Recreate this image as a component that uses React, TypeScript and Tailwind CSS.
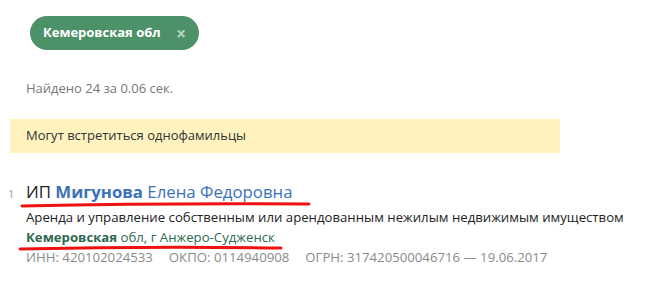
export default function App() {
  return (
    <div className="relative h-[287px] w-[653px] overflow-hidden bg-white text-[13px] text-[#333]" style={{ fontFamily: '"Open Sans", "Noto Sans", sans-serif' }}>
      <div className="pl-[30px] pt-[16px]">
        <div className="flex h-[34px] w-[169px] items-center justify-between rounded-full bg-[#4d9168] pl-[13px] pr-[13px]">
          <span className="text-[13px] font-bold text-white">Кемеровская обл</span>
          <span className="text-[17px] font-bold leading-none text-[#b3d6bf]">×</span>
        </div>
      </div>

      <div className="mt-[29px] pl-[26px] text-[#777]">Найдено 24 за 0.06 сек.</div>

      <div className="ml-[10px] mt-[20px] flex h-[34px] w-[550px] items-center bg-[#fef2bf] pl-[16px] text-[#333]">
        Могут встретиться однофамильцы
      </div>

      <div className="relative mt-[27px] flex">
        <div className="w-[26px] pl-[8px] pt-[6px] text-[11px] text-[#999]">1</div>
        <div className="flex flex-col">
          <div className="text-[16.8px] leading-[24px] text-[#3b71b9]">
            <span className="text-[#222]">ИП </span>
            <span className="font-bold">Мигунова</span> Елена Федоровна
          </div>
          <div className="mt-[3px] text-[13.2px] leading-[20px] text-[#222]">
            Аренда и управление собственным или арендованным нежилым недвижимым имуществом
          </div>
          <div className="text-[13.2px] leading-[20px] text-[#2d6a4f]">
            <span className="font-bold">Кемеровская</span> обл, г Анжеро-Судженск
          </div>
          <div className="flex gap-[16px] text-[13.2px] leading-[20px] text-[#8a8a8a]">
            <span>ИНН: 420102024533</span>
            <span>ОКПО: 0114940908</span>
            <span>ОГРН: 317420500046716 — 19.06.2017</span>
          </div>
        </div>
        <svg className="pointer-events-none absolute left-0 top-0" width="653" height="100" viewBox="0 0 653 100">
          <path d="M22 26 Q160 23 309 24" stroke="#ee1111" strokeWidth="3" fill="none" strokeLinecap="round" />
          <path d="M20 69 Q150 66 281 68" stroke="#ee1111" strokeWidth="3" fill="none" strokeLinecap="round" />
        </svg>
      </div>
    </div>
  );
}
